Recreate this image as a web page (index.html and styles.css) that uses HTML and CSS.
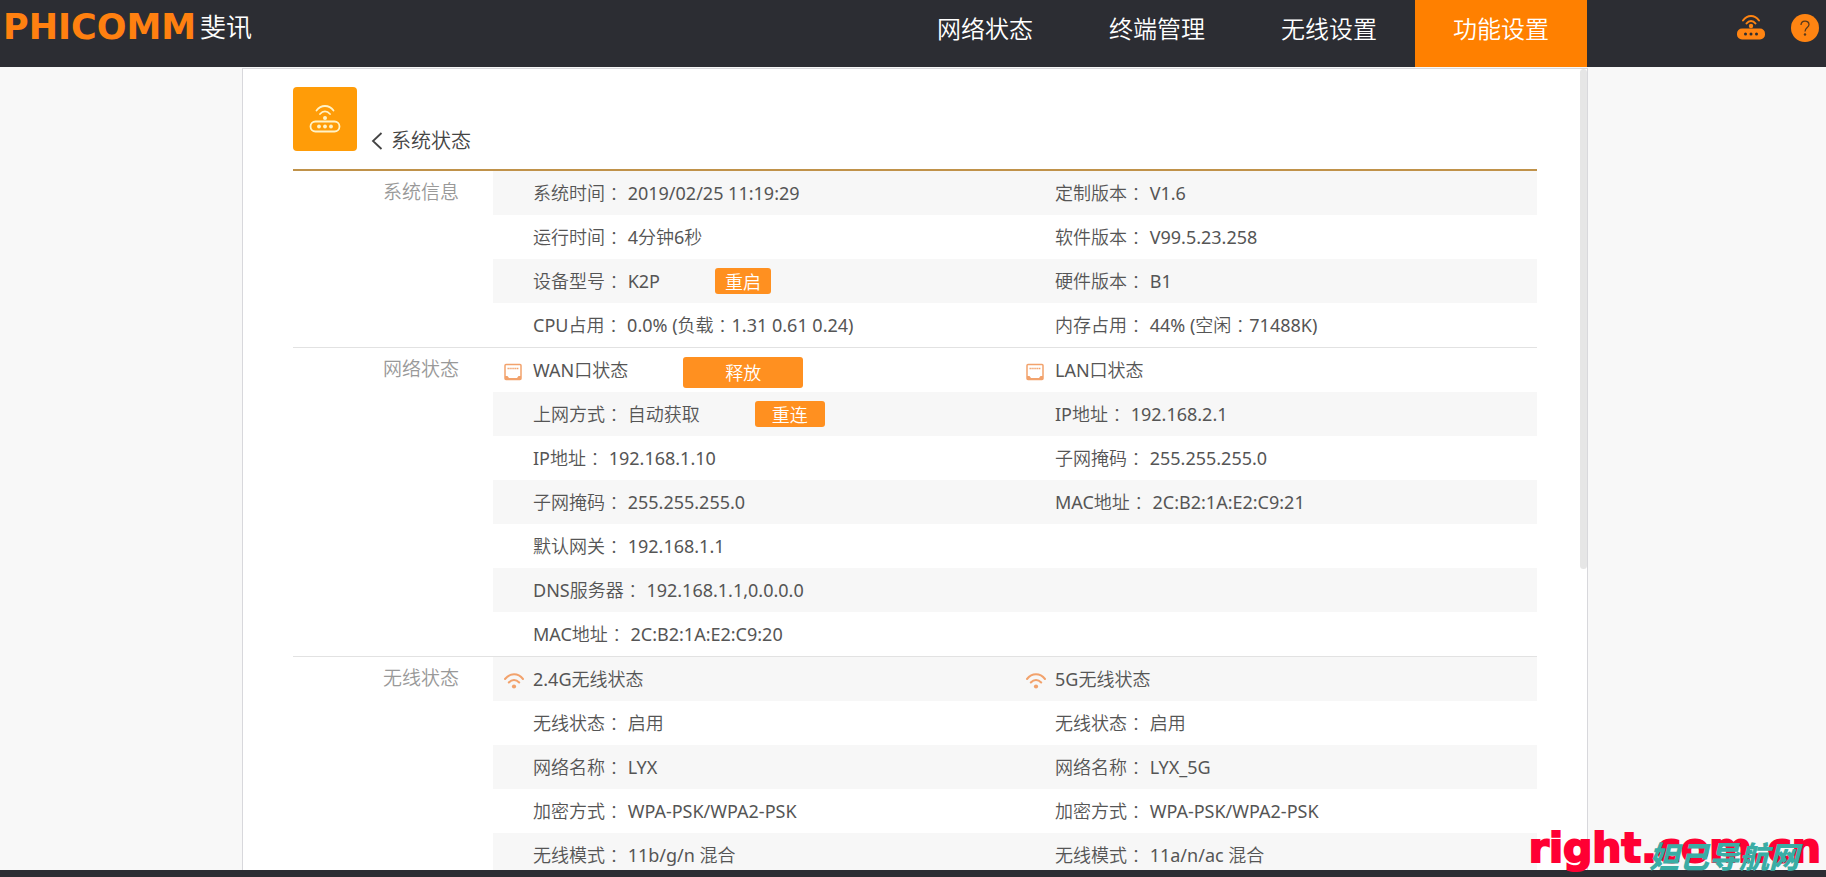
FILE: index.html
```html
<!DOCTYPE html>
<html lang="zh-CN">
<head>
<meta charset="utf-8">
<title>系统状态</title>
<link rel="stylesheet" href="styles.css">
</head>
<body>
<svg class="sprite" aria-hidden="true">
  <symbol id="port" viewBox="0 0 18 18">
    <rect x="1" y="1.5" width="16" height="15" rx="1" fill="none" stroke="currentColor" stroke-width="1.5"/>
    <path d="M3.5 5.5h11" stroke="currentColor" stroke-width="1.5" stroke-dasharray="1.4 .5"/>
    <path d="M1 13h2.500l1.500 2h8l1.500-2h2.500v3.500h-16z" fill="currentColor"/>
  </symbol>
  <symbol id="wifi" viewBox="0 0 20 16">
    <path d="M1 6C6-.2 14-.2 19 6M4.800 9.500C8 6 12 6 15.200 9.500" fill="none" stroke="currentColor" stroke-width="2" stroke-linecap="round"/>
    <circle cx="10" cy="13.500" r="2.100" fill="currentColor"/>
  </symbol>
</svg>

<header class="topbar">
  <a class="logo" href="#"><span class="logo-mark">PHICOMM</span><span class="logo-name">斐讯</span></a>
  <nav class="nav">
    <a href="#">网络状态</a>
    <a href="#">终端管理</a>
    <a href="#">无线设置</a>
    <a class="active" href="#" aria-current="page">功能设置</a>
  </nav>
  <div class="tools">
    <a href="#" aria-label="路由器">
      <svg width="28" height="28" viewBox="0 0 28 28">
        <path d="M6 6.500C10.500.5 17.500.5 22 6.500M9.500 9.500C12 6 16 6 18.500 9.500" fill="none" stroke="#ff8412" stroke-width="2" stroke-linecap="round"/>
        <circle cx="14" cy="12" r="2.200" fill="#ff8412"/>
        <rect x="0" y="14.500" width="28" height="11" rx="5" fill="#ff8412"/>
        <circle cx="8.500" cy="20" r="1.500" fill="#2c2d33"/><circle cx="14" cy="20" r="1.500" fill="#2c2d33"/><circle cx="19.500" cy="20" r="1.500" fill="#2c2d33"/>
      </svg>
    </a>
    <a href="#" aria-label="帮助">
      <svg width="28" height="28" viewBox="0 0 28 28">
        <circle cx="14" cy="14" r="14" fill="#ff8412"/>
        <path d="M10 11C10 5.800 18 5.800 18 10.500C18 13.500 14 13.500 14 17.500" fill="none" stroke="#5a3a1c" stroke-width="1.300"/>
        <circle cx="14" cy="20.500" r="1.200" fill="#5a3a1c"/>
      </svg>
    </a>
  </div>
</header>

<main class="page">
  <div class="panel">
    <div class="head">
      <svg class="tile" viewBox="0 0 64 64" aria-hidden="true">
        <g fill="none" stroke="#fff3c8" stroke-width="1.800" stroke-linecap="round">
          <path d="M23.500 23.500C28 17.500 36 17.500 40.500 23.500M27 27C30 23.500 34 23.500 37 27"/>
          <rect x="17.500" y="34.500" width="29" height="10" rx="5"/>
        </g>
        <g fill="#fff3c8"><circle cx="32" cy="31" r="2"/><circle cx="26" cy="39.500" r="1.900"/><circle cx="32" cy="39.500" r="1.900"/><circle cx="38" cy="39.500" r="1.900"/></g>
      </svg>
      <a class="back" href="#">
        <svg width="12" height="18" viewBox="0 0 12 18" aria-hidden="true"><path d="M10.500 1L2 9l8.500 8" fill="none" stroke="#444" stroke-width="1.800"/></svg>
        <span>系统状态</span>
      </a>
    </div>

    <section class="group">
      <h2>系统信息</h2>
      <div class="rows">
        <div class="row shade"><p>系统时间<i>：</i> 2019/02/25 11:19:29</p><p>定制版本<i>：</i> V1.6</p></div>
        <div class="row"><p>运行时间<i>：</i> 4分钟6秒</p><p>软件版本<i>：</i> V99.5.23.258</p></div>
        <div class="row shade"><p>设备型号<i>：</i> K2P<button class="btn" type="button">重启</button></p><p>硬件版本<i>：</i> B1</p></div>
        <div class="row"><p>CPU占用<i>：</i> 0.0% (负载<i>：</i>1.31 0.61 0.24)</p><p>内存占用<i>：</i> 44% (空闲<i>：</i>71488K)</p></div>
      </div>
    </section>

    <section class="group">
      <h2>网络状态</h2>
      <div class="rows">
        <div class="row"><p class="sub"><svg class="icon"><use href="#port"/></svg>WAN口状态<button class="btn release" type="button">释放</button></p><p class="sub"><svg class="icon"><use href="#port"/></svg>LAN口状态</p></div>
        <div class="row shade"><p>上网方式<i>：</i> 自动获取<button class="btn reconnect" type="button">重连</button></p><p>IP地址<i>：</i> 192.168.2.1</p></div>
        <div class="row"><p>IP地址<i>：</i> 192.168.1.10</p><p>子网掩码<i>：</i> 255.255.255.0</p></div>
        <div class="row shade"><p>子网掩码<i>：</i> 255.255.255.0</p><p>MAC地址<i>：</i> 2C:B2:1A:E2:C9:21</p></div>
        <div class="row"><p>默认网关<i>：</i> 192.168.1.1</p></div>
        <div class="row shade"><p>DNS服务器<i>：</i> 192.168.1.1,0.0.0.0</p></div>
        <div class="row"><p>MAC地址<i>：</i> 2C:B2:1A:E2:C9:20</p></div>
      </div>
    </section>

    <section class="group">
      <h2>无线状态</h2>
      <div class="rows">
        <div class="row shade"><p class="sub"><svg class="icon wide"><use href="#wifi"/></svg>2.4G无线状态</p><p class="sub"><svg class="icon wide"><use href="#wifi"/></svg>5G无线状态</p></div>
        <div class="row"><p>无线状态<i>：</i> 启用</p><p>无线状态<i>：</i> 启用</p></div>
        <div class="row shade"><p>网络名称<i>：</i> LYX</p><p>网络名称<i>：</i> LYX_5G</p></div>
        <div class="row"><p>加密方式<i>：</i> WPA-PSK/WPA2-PSK</p><p>加密方式<i>：</i> WPA-PSK/WPA2-PSK</p></div>
        <div class="row shade"><p>无线模式<i>：</i> 11b/g/n 混合</p><p>无线模式<i>：</i> 11a/n/ac 混合</p></div>
      </div>
    </section>
    <div class="thumb"></div>
  </div>
</main>

<footer class="footer"></footer>
<div class="mark"><span class="mark-site">right.com.cn</span><span class="mark-name">妲己导航网</span></div>
</body>
</html>
```

FILE: styles.css
```css
* { box-sizing: border-box; }

body {
  margin: 0;
  height: 100vh;
  display: flex;
  flex-direction: column;
  overflow: hidden;
  background: #f8f8f8;
  color: #555;
  font: 400 18px/44px "Noto Sans", "Noto Sans CJK SC DemiLight", "Noto Sans CJK SC Light", "Noto Sans CJK SC", sans-serif;
}

a { color: inherit; text-decoration: none; }
h2, p { margin: 0; font-weight: inherit; }
.sprite { display: none; }

.topbar {
  flex: none;
  display: flex;
  height: 67px;
  background: #2c2d33;
  color: #fff;
}
.logo {
  display: flex;
  align-items: center;
  gap: 4px;
  height: 54px;
  padding-left: 3px;
}
.logo-mark { font: bold 35px/54px "DejaVu Sans", sans-serif; color: #ff8010; }
.logo-name { font-size: 26px; }
.nav { display: flex; margin-left: auto; }
.nav a {
  width: 172px;
  text-align: center;
  font-size: 24px;
  line-height: 57px;
}
.nav .active { background: #ff8000; }
.tools {
  display: flex;
  justify-content: flex-end;
  gap: 26px;
  width: 239px;
  padding: 14px 7px 0 0;
}
.tools svg { display: block; }

.page {
  flex: 1;
  min-height: 0;
  display: flex;
  padding: 1px 238px 0 242px;
}
.panel {
  position: relative;
  flex: 1;
  overflow: hidden;
  padding: 18px 50px 0;
  background: #fff;
  border: 1px solid #d8d8dc;
  border-bottom: 0;
}
.thumb {
  position: absolute;
  top: 0;
  right: 0;
  width: 7px;
  height: 500px;
  border-radius: 4px;
  background: #e6e6e6;
}

.head {
  display: flex;
  align-items: flex-end;
  gap: 14px;
  padding-bottom: 18px;
  border-bottom: 2px solid #c0924a;
}
.tile {
  width: 64px;
  height: 64px;
  border-radius: 4px;
  background: #ff9c08;
}
.back {
  display: flex;
  align-items: center;
  gap: 8px;
  color: #444;
  font-size: 20px;
  line-height: 20px;
}

.group { display: flex; }
.group + .group { border-top: 1px solid #e2e2e2; }
.group h2 {
  width: 200px;
  padding-right: 34px;
  text-align: right;
  color: #999;
  font-size: 19px;
  line-height: 42px;
}
.rows { flex: 1; }
.row {
  display: grid;
  grid-template-columns: 1fr 1fr;
  height: 44px;
}
.shade { background: #f7f7f7; }
.row p {
  display: flex;
  align-items: center;
  padding-left: 40px;
  white-space: pre;
}
.row .sub { padding-left: 11px; }
.row i {
  font-family: "Noto Sans CJK TC", sans-serif;
  font-style: normal;
  font-weight: 300;
}
.icon {
  width: 18px;
  height: 18px;
  margin: 4px 11px 0 0;
  color: #f2a26c;
}
.icon.wide { width: 20px; height: 16px; margin-right: 9px; }

.btn {
  width: 56px;
  height: 26px;
  margin-left: 55px;
  padding: 2px 0 0;
  border: 0;
  border-radius: 3px;
  background: #ff9020;
  color: #fff;
  font: inherit;
  line-height: 24px;
}
.release { width: 120px; height: 31px; margin-top: 4px; }
.reconnect { width: 70px; }

.footer { flex: none; height: 7px; background: #2c2d33; }

.mark {
  position: absolute;
  right: 5px;
  bottom: 0;
  line-height: 44px;
}
.mark-site {
  color: #ff0033;
  font-family: "DejaVu Sans", sans-serif;
  font-size: 41px;
  font-weight: bold;
  -webkit-text-stroke: 2px #ff0033;
}
.mark-name {
  position: absolute;
  right: 22px;
  bottom: 0;
  color: #3aada5;
  font-family: "Noto Sans CJK SC", sans-serif;
  font-size: 30px;
  font-style: italic;
  font-weight: 900;
  white-space: nowrap;
}
```
